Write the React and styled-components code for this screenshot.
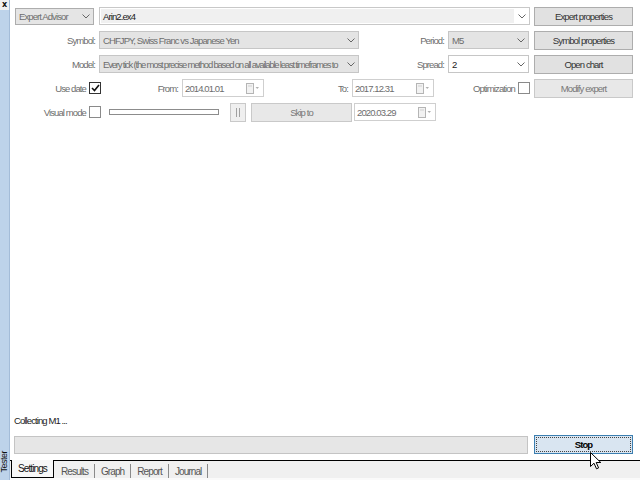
import React from "react";
import styled, { createGlobalStyle } from "styled-components";

const GlobalStyle = createGlobalStyle`
  html, body {
    margin: 0;
    padding: 0;
    width: 640px;
    height: 480px;
    overflow: hidden;
    background: #ffffff;
  }
  #root {
    height: 100%;
  }
  * {
    box-sizing: border-box;
  }
`;

const Window = styled.div`
  position: relative;
  display: flex;
  width: 640px;
  height: 480px;
  font-family: "Liberation Sans", Arial, sans-serif;
  font-size: 9.5px;
  letter-spacing: -0.9px;
  color: #333;
`;

const Sidebar = styled.div`
  width: 10px;
  display: flex;
  flex-direction: column;
  background: #bdd3ea;
  border-right: 1px solid #a3bcd8;
`;

const CloseBox = styled.div`
  height: 10px;
  background: #f0f0f0;
  font-family: "DejaVu Sans", sans-serif;
  font-size: 8px;
  font-weight: bold;
  letter-spacing: 0;
  line-height: 9px;
  text-align: center;
  color: #111;
`;

const SideFill = styled.div`
  flex: 1;
`;

const SideTitle = styled.div`
  writing-mode: vertical-rl;
  transform: rotate(180deg);
  font-size: 9px;
  letter-spacing: -0.5px;
  color: #111;
  padding: 7px 0 6px;
  line-height: 9px;
  width: 9px;
`;

const Main = styled.div`
  flex: 1;
  display: flex;
  flex-direction: column;
  background: #ffffff;
`;

const Form = styled.div`
  padding: 7px 7px 0 5px;
  display: flex;
  flex-direction: column;
  gap: 6px;
`;

const Row = styled.div`
  display: flex;
  align-items: center;
  height: 18px;
`;

const Label = styled.div`
  width: ${(p) => p.$w}px;
  flex-shrink: 0;
  text-align: right;
  padding-right: ${(p) => (p.$pad != null ? p.$pad : 4)}px;
  color: #6d6d6d;
  white-space: nowrap;
`;

const Combo = styled.div`
  width: ${(p) => p.$w}px;
  height: ${(p) => p.$h || 18}px;
  flex-shrink: 0;
  display: flex;
  align-items: center;
  border: 1px solid ${(p) => p.$border || "#c6c6c6"};
  background: ${(p) => p.$bg || "#ffffff"};
  margin-right: ${(p) => p.$mr || 0}px;
`;

const ComboField = styled.div`
  flex: 1;
  align-self: stretch;
  display: flex;
  align-items: center;
  padding-left: 2px;
  margin: 1px 0 1px 1px;
  background: ${(p) => p.$bg || "transparent"};
  color: ${(p) => (p.$dim ? "#6d6d6d" : "#222")};
  letter-spacing: ${(p) => (p.$tight ? "-1.2px" : "inherit")};
  white-space: nowrap;
  overflow: hidden;
`;

const ComboArrow = styled.div`
  width: 15px;
  display: flex;
  justify-content: center;
  align-items: center;
`;

const Button = styled.div`
  width: ${(p) => p.$w || 99}px;
  height: ${(p) => p.$h || 19}px;
  flex-shrink: 0;
  display: flex;
  align-items: center;
  justify-content: center;
  background: ${(p) => (p.$off ? "#e8e8e8" : "#e1e1e1")};
  border: 1px solid ${(p) => (p.$off ? "#c9c9c9" : "#adadad")};
  color: ${(p) => (p.$off ? "#777" : "#333")};
  margin-left: ${(p) => p.$ml || 0}px;
  margin-right: ${(p) => p.$mr || 0}px;
`;

const Check = styled.div`
  width: 12px;
  height: 12px;
  flex-shrink: 0;
  border: 1px solid ${(p) => (p.$on ? "#333" : "#8a8a8a")};
  background: #fff;
  display: flex;
  align-items: center;
  justify-content: center;
  margin-right: ${(p) => p.$mr || 0}px;
`;

const DateBox = styled.div`
  width: 82px;
  height: 18px;
  flex-shrink: 0;
  display: flex;
  align-items: center;
  justify-content: space-between;
  border: 1px solid #cfcfcf;
  background: #fff;
  color: #6d6d6d;
  padding: 0 3px 0 2px;
`;

const Track = styled.div`
  width: 110px;
  height: 6px;
  flex-shrink: 0;
  border: 1px solid #8c8c8c;
  background: #fff;
  margin: 0 11px 0 8px;
`;

const PauseButton = styled.div`
  width: 16px;
  height: 19px;
  flex-shrink: 0;
  display: flex;
  align-items: center;
  justify-content: center;
  gap: 2px;
  border: 1px solid #c9c9c9;
  background: #efefef;
  margin-right: 5px;
`;

const PauseBar = styled.span`
  width: 1px;
  height: 9px;
  background: #a0a0a0;
`;

const Spacer = styled.div`
  flex: 1;
`;

const StatusText = styled.div`
  padding-left: 4px;
  color: #222;
  height: 12px;
  line-height: 12px;
  margin-bottom: 8px;
`;

const ProgressRow = styled.div`
  display: flex;
  align-items: center;
  padding: 0 7px 0 4px;
  gap: 6px;
  height: 19px;
  margin-bottom: 6px;
`;

const Progress = styled.div`
  flex: 1;
  height: 18px;
  background: #e6e6e6;
  border: 1px solid #c4c4c4;
`;

const StopButton = styled.div`
  position: relative;
  width: 99px;
  height: 19px;
  display: flex;
  align-items: center;
  justify-content: center;
  background: #d9e5f1;
  border: 1px solid #3c7fb1;
  color: #000;
  font-weight: bold;
  &::after {
    content: "";
    position: absolute;
    inset: 1px;
    border: 1px dotted #444;
  }
`;

const TabBar = styled.div`
  height: 20px;
  display: flex;
  align-items: flex-start;
  background: #f0f0f0;
  border-top: 1px solid #000;
  border-bottom: 2px solid #fafafa;
  padding-left: 1px;
  font-size: 10px;
`;

const Tab = styled.div`
  display: flex;
  align-items: center;
  height: ${(p) => (p.$active ? 18 : 14)}px;
  margin-top: ${(p) => (p.$active ? -1 : 3)}px;
  padding: 0 6px;
  background: ${(p) => (p.$active ? "#f7f7f7" : "transparent")};
  border: ${(p) => (p.$active ? "1px solid #000" : "none")};
  border-top: none;
  border-right: ${(p) => (p.$active ? "1px solid #000" : "1px solid #8a8a8a")};
  color: ${(p) => (p.$active ? "#111" : "#555")};
  margin-right: ${(p) => (p.$active ? 1 : 0)}px;
`;

const Cursor = styled.svg`
  position: absolute;
  left: 590px;
  top: 452px;
`;

const Chevron = () => (
  <svg width="8" height="5" viewBox="0 0 8 5">
    <polyline points="0.5,0.5 4,4 7.5,0.5" fill="none" stroke="#666" strokeWidth="1" />
  </svg>
);

const CalendarIcon = () => (
  <svg width="14" height="11" viewBox="0 0 14 11">
    <rect x="0.5" y="0.5" width="7" height="10" fill="#f2f2f2" stroke="#b5b5b5" />
    <line x1="2" y1="3" x2="6" y2="3" stroke="#cfcfcf" />
    <polygon points="9.5,4 13,4 11.25,6" fill="#b0b0b0" />
  </svg>
);

const CheckMark = () => (
  <svg width="9" height="8" viewBox="0 0 9 8">
    <polyline points="1,4 3.5,6.5 8,1" fill="none" stroke="#111" strokeWidth="1.6" />
  </svg>
);

const ComboBox = ({ w, text, bg, fieldBg, border, dim, mr, h, tight }) => (
  <Combo $w={w} $bg={bg} $border={border} $mr={mr} $h={h}>
    <ComboField $bg={fieldBg} $dim={dim} $tight={tight}>{text}</ComboField>
    <ComboArrow>
      <Chevron />
    </ComboArrow>
  </Combo>
);

const DateInput = ({ value }) => (
  <DateBox>
    <span>{value}</span>
    <CalendarIcon />
  </DateBox>
);

export default function App() {
  return (
    <Window>
      <GlobalStyle />
      <Sidebar>
        <CloseBox>x</CloseBox>
        <SideFill />
        <SideTitle>Tester</SideTitle>
      </Sidebar>
      <Main>
        <Form>
          <Row>
            <ComboBox w={79} h={17} text="Expert Advisor" bg="#e5e5e5" border="#adadad" dim mr={5} />
            <ComboBox w={431} text="Arin2.ex4" bg="#ffffff" fieldBg="#f0f0f0" border="#c8c8c8" mr={4} />
            <Button>Expert properties</Button>
          </Row>
          <Row>
            <Label $w={84}>Symbol:</Label>
            <ComboBox w={260} text="CHFJPY, Swiss Franc vs Japanese Yen" bg="#e4e4e4" dim />
            <Label $w={89}>Period:</Label>
            <ComboBox w={81} text="M5" bg="#e4e4e4" dim mr={5} />
            <Button>Symbol properties</Button>
          </Row>
          <Row>
            <Label $w={84}>Model:</Label>
            <ComboBox
              w={260}
              text="Every tick (the most precise method based on all available least timeframes to"
              bg="#e4e4e4"
              dim
              tight
            />
            <Label $w={89}>Spread:</Label>
            <ComboBox w={81} text="2" bg="#ffffff" mr={5} />
            <Button>Open chart</Button>
          </Row>
          <Row>
            <Label $w={74} $pad={3}>Use date</Label>
            <Check $on>
              <CheckMark />
            </Check>
            <Label $w={81}>From:</Label>
            <DateInput value="2014.01.01" />
            <Label $w={88}>To:</Label>
            <DateInput value="2017.12.31" />
            <Label $w={84} $pad={3}>Optimization</Label>
            <Check $mr={4} />
            <Button $off>Modify expert</Button>
          </Row>
          <Row>
            <Label $w={74} $pad={3}>Visual mode</Label>
            <Check />
            <Track />
            <PauseButton>
              <PauseBar />
              <PauseBar />
            </PauseButton>
            <Button $w={101} $off $mr={2}>Skip to</Button>
            <DateInput value="2020.03.29" />
          </Row>
        </Form>
        <Spacer />
        <StatusText>Collecting M1 ...</StatusText>
        <ProgressRow>
          <Progress />
          <StopButton>Stop</StopButton>
        </ProgressRow>
        <TabBar>
          <Tab $active>Settings</Tab>
          <Tab>Results</Tab>
          <Tab>Graph</Tab>
          <Tab>Report</Tab>
          <Tab>Journal</Tab>
        </TabBar>
      </Main>
      <Cursor width="12" height="18" viewBox="0 0 12 18">
        <path d="M0.5,0.5 L0.5,14.5 L4,11.2 L6.5,16.8 L8.6,15.9 L6.2,10.5 L10.8,10.5 Z" fill="#fff" stroke="#000" strokeWidth="1" />
      </Cursor>
    </Window>
  );
}
